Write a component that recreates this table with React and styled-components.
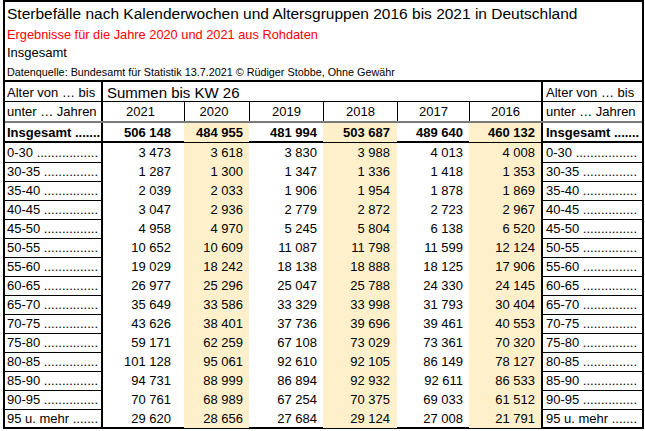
import React from "react";
import styled, { createGlobalStyle } from "styled-components";

const GlobalStyle = createGlobalStyle`
  html, body { margin: 0; padding: 0; background: #fff; }
  body { font-family: "Liberation Sans", Arial, sans-serif; color: #000; }
`;

const COLS = "98px 81px 65px 74px 74px 72px 72px 101px";
const HIGHLIGHT = "#fff0cc";

const Sheet = styled.div`
  width: 641px;
  box-sizing: border-box;
  border: 2px solid #000;
  margin-left: 3px;
`;

const TitleBlock = styled.header`
  border-bottom: 2px solid #000;
  padding-left: 2px;
  white-space: nowrap;
`;

const Title = styled.div`
  font-size: 15.5px;
  line-height: 24px;
  height: 24px;
`;

const Subtitle = styled.div`
  font-size: 12.8px;
  line-height: 18px;
  height: 18px;
  color: #ff0000;
`;

const Scope = styled.div`
  font-size: 13px;
  line-height: 17px;
  height: 17px;
`;

const Source = styled.div`
  font-size: 10.8px;
  line-height: 13px;
  padding: 5px 0 1px;
`;

const Row = styled.div`
  display: grid;
  grid-template-columns: ${COLS};
  height: ${(p) => p.$h}px;
  box-sizing: border-box;
  border-bottom: ${(p) => p.$line || "none"};
  font-size: 13px;
  line-height: 19px;
`;

const LabelCell = styled.div`
  white-space: pre;
  box-sizing: border-box;
  font-weight: ${(p) => (p.$bold ? 700 : 400)};
  padding-top: ${(p) => p.$top || 0}px;
  ${(p) =>
    p.$side === "left"
      ? "border-right: 2px solid #000; padding-left: 2px;"
      : "border-left: 2px solid #000; padding-left: 3px;"}
  border-bottom: ${(p) => (p.$rule ? "1px solid #000" : "none")};
`;

const SpanCell = styled.div`
  grid-column: span 6;
  font-size: 15px;
  padding: 1px 0 0 4px;
  white-space: nowrap;
`;

const YearCell = styled.div`
  text-align: center;
  box-sizing: border-box;
  border-left: ${(p) => (p.$first ? "none" : "1px solid #000")};
  padding-right: ${(p) => p.$shift || 0}px;
`;

const NumCell = styled.div`
  text-align: right;
  box-sizing: border-box;
  padding-right: ${(p) => p.$pad}px;
  background: ${(p) => (p.$hl ? HIGHLIGHT : "transparent")};
  font-weight: ${(p) => (p.$bold ? 700 : 400)};
  white-space: nowrap;
`;

const YEARS = [
  { y: "2021", hl: false, pad: 13, shift: 6 },
  { y: "2020", hl: true, pad: 6, shift: 6 },
  { y: "2019", hl: false, pad: 6, shift: 0 },
  { y: "2018", hl: true, pad: 7, shift: 0 },
  { y: "2017", hl: false, pad: 6, shift: 0 },
  { y: "2016", hl: true, pad: 6, shift: 0 },
];

const TOTAL = ["506 148", "484 955", "481 994", "503 687", "489 640", "460 132"];

const ROWS = [
  ["0-30", 17, "3 473", "3 618", "3 830", "3 988", "4 013", "4 008"],
  ["30-35", 15, "1 287", "1 300", "1 347", "1 336", "1 418", "1 353"],
  ["35-40", 15, "2 039", "2 033", "1 906", "1 954", "1 878", "1 869"],
  ["40-45", 15, "3 047", "2 936", "2 779", "2 872", "2 723", "2 967"],
  ["45-50", 15, "4 958", "4 970", "5 245", "5 804", "6 138", "6 520"],
  ["50-55", 15, "10 652", "10 609", "11 087", "11 798", "11 599", "12 124"],
  ["55-60", 15, "19 029", "18 242", "18 138", "18 888", "18 125", "17 906"],
  ["60-65", 15, "26 977", "25 296", "25 047", "25 788", "24 330", "24 145"],
  ["65-70", 15, "35 649", "33 586", "33 329", "33 998", "31 793", "30 404"],
  ["70-75", 15, "43 626", "38 401", "37 736", "39 696", "39 461", "40 553"],
  ["75-80", 15, "59 171", "62 259", "67 108", "73 029", "73 361", "70 320"],
  ["80-85", 15, "101 128", "95 061", "92 610", "92 105", "86 149", "78 127"],
  ["85-90", 15, "94 731", "88 999", "86 894", "92 932", "92 611", "86 533"],
  ["90-95", 15, "70 761", "68 989", "67 254", "70 375", "69 033", "61 512"],
  ["95 u. mehr", 7, "29 620", "28 656", "27 684", "29 124", "27 008", "21 791"],
];

function Label({ side, name, dots, bold, rule }) {
  return (
    <LabelCell $side={side} $bold={bold} $rule={rule}>
      {`${name} ${".".repeat(dots)}`}
    </LabelCell>
  );
}

export default function App() {
  return (
    <>
      <GlobalStyle />
      <Sheet>
        <TitleBlock>
          <Title>
            Sterbefälle nach Kalenderwochen und Altersgruppen 2016 bis 2021 in Deutschland
          </Title>
          <Subtitle>Ergebnisse für die Jahre 2020 und 2021 aus Rohdaten</Subtitle>
          <Scope>Insgesamt</Scope>
          <Source>
            Datenquelle: Bundesamt für Statistik 13.7.2021 © Rüdiger Stobbe, Ohne Gewähr
          </Source>
        </TitleBlock>

        <Row $h={20} $line="1px solid #000">
          <LabelCell $side="left" $top={1}>Alter von … bis</LabelCell>
          <SpanCell>Summen bis KW 26</SpanCell>
          <LabelCell $side="right" $top={1}>Alter von … bis</LabelCell>
        </Row>

        <Row $h={21} $line="2px solid #7a7a7a">
          <LabelCell $side="left">unter … Jahren</LabelCell>
          {YEARS.map((c, i) => (
            <YearCell key={c.y} $first={i === 0} $shift={c.shift}>
              {c.y}
            </YearCell>
          ))}
          <LabelCell $side="right">unter … Jahren</LabelCell>
        </Row>

        <Row $h={20} $line="2px solid #000">
          <Label side="left" name="Insgesamt" dots={7} bold />
          {TOTAL.map((v, i) => (
            <NumCell key={i} $pad={YEARS[i].pad} $hl={YEARS[i].hl} $bold>
              {v}
            </NumCell>
          ))}
          <Label side="right" name="Insgesamt" dots={7} bold />
        </Row>

        {ROWS.map((r, ri) => {
          const last = ri === ROWS.length - 1;
          const [name, dots, ...vals] = r;
          return (
            <Row key={name} $h={last ? 18 : 19}>
              <Label side="left" name={name} dots={dots} rule={!last} />
              {vals.map((v, i) => (
                <NumCell key={i} $pad={YEARS[i].pad} $hl={YEARS[i].hl}>
                  {v}
                </NumCell>
              ))}
              <Label side="right" name={name} dots={dots} rule={!last} />
            </Row>
          );
        })}
      </Sheet>
    </>
  );
}
